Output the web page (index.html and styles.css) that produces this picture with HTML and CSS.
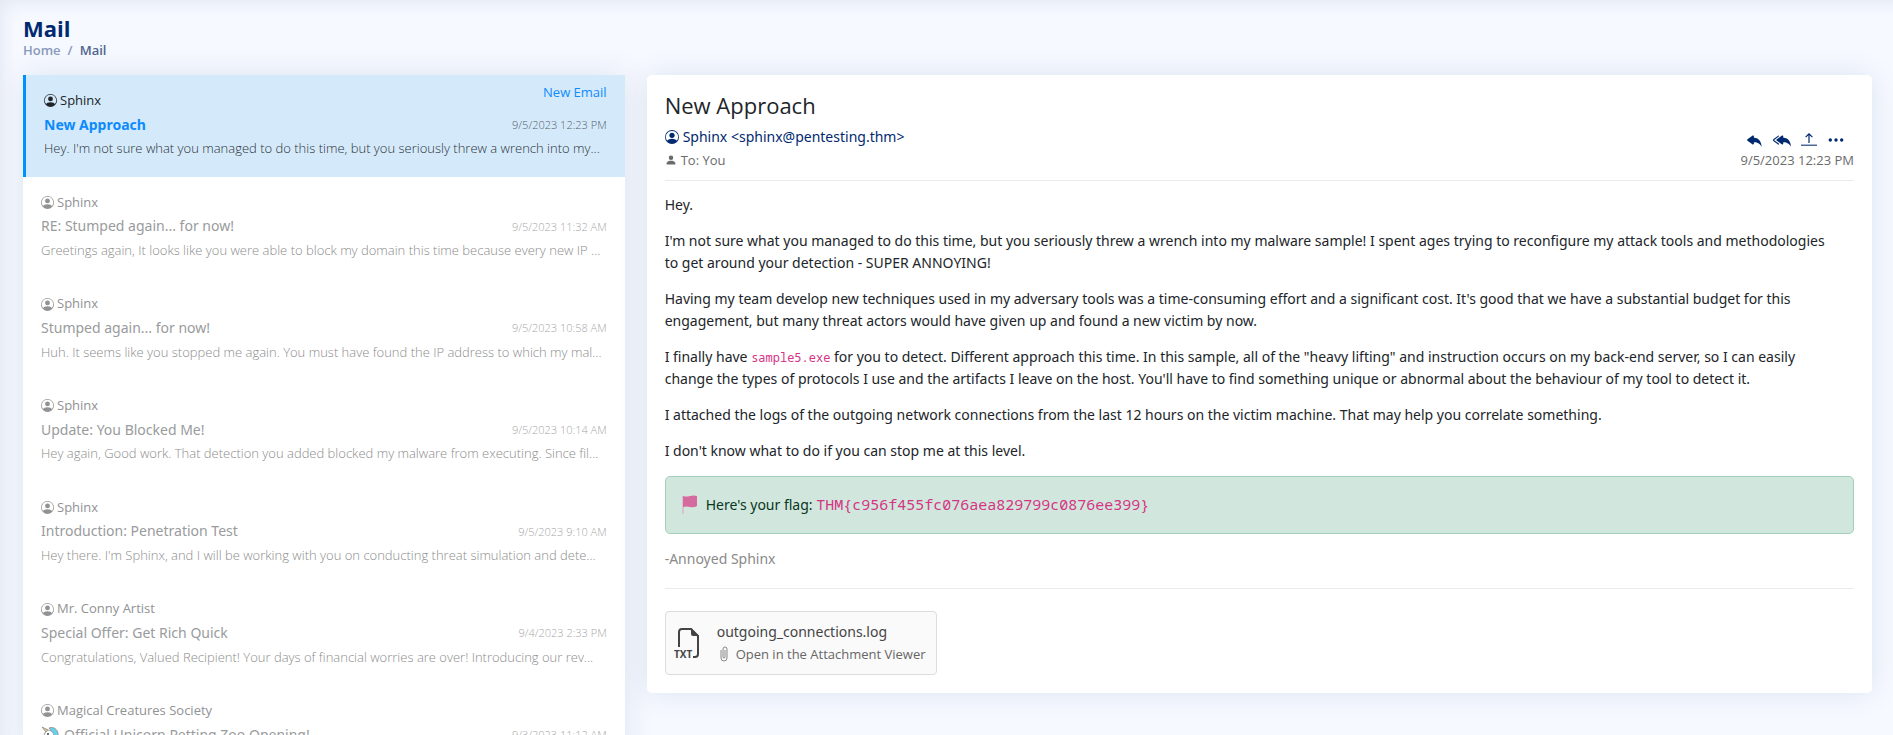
FILE: index.html
```html
<!DOCTYPE html>
<html lang="en">
<head>
<meta charset="utf-8">
<title>Mail</title>
<link rel="stylesheet" href="styles.css">
</head>
<body>
<svg class="sprite" aria-hidden="true">
  <symbol id="person-circle" viewBox="0 0 16 16">
    <path d="M11 6a3 3 0 1 1-6 0 3 3 0 0 1 6 0z"/>
    <path fill-rule="evenodd" d="M0 8a8 8 0 1 1 16 0A8 8 0 0 1 0 8zm8-7a7 7 0 0 0-5.468 11.37C3.242 11.226 4.805 10 8 10s4.757 1.225 5.468 2.37A7 7 0 0 0 8 1z"/>
  </symbol>
  <symbol id="person" viewBox="0 0 16 16">
    <path d="M3 14s-1 0-1-1 1-4 6-4 6 3 6 4-1 1-1 1H3zm5-6a3 3 0 1 0 0-6 3 3 0 0 0 0 6z"/>
  </symbol>
  <symbol id="reply" viewBox="0 0 16 16">
    <path d="M5.921 11.9 1.353 8.62a.719.719 0 0 1 0-1.238L5.921 4.1A.716.716 0 0 1 7 4.719V6c1.5 0 6 0 7 8-2.5-4.5-7-4-7-4v1.281c0 .56-.606.898-1.079.62z"/>
  </symbol>
  <symbol id="reply-all" viewBox="0 0 16 16">
    <path d="M8.021 11.9 3.453 8.62a.719.719 0 0 1 0-1.238L8.021 4.1a.716.716 0 0 1 1.079.619V6c1.5 0 6 0 7 8-2.5-4.5-7-4-7-4v1.281c0 .56-.606.898-1.079.62z"/>
    <path d="M5.232 4.293a.5.5 0 0 1-.106.7L1.114 7.945a.5.5 0 0 1-.042.028.147.147 0 0 0 0 .252.503.503 0 0 1 .042.028l4.012 2.954a.5.5 0 1 1-.593.805L.539 9.073a1.147 1.147 0 0 1 0-1.946l3.994-2.94a.5.5 0 0 1 .699.106z"/>
  </symbol>
  <symbol id="upload" viewBox="0 0 16 16">
    <path opacity=".7" d="M0 12.500h16v1.500H0z"/>
    <path d="M7.400 3.200v7.800h1.200V3.200l2.400 2.400.8-.8L8 1 4.200 4.800l.8.8z"/>
  </symbol>
  <symbol id="dots" viewBox="0 0 16 16">
    <path d="M4 8a1.700 1.700 0 1 1-3.400 0A1.700 1.700 0 0 1 4 8zm5.700 0a1.700 1.700 0 1 1-3.400 0 1.700 1.700 0 0 1 3.400 0zm5.700 0a1.700 1.700 0 1 1-3.400 0 1.700 1.700 0 0 1 3.400 0z"/>
  </symbol>
</svg>

<main class="page">
  <header class="page-head">
    <h1>Mail</h1>
    <nav class="crumbs" aria-label="Breadcrumb"><a href="#home">Home</a><span>/</span><b>Mail</b></nav>
  </header>

  <div class="columns">
    <section class="inbox" aria-label="Inbox">
      <a class="mail mail-active" href="#m1">
        <span class="badge">New Email</span>
        <span class="sender"><svg><use href="#person-circle"/></svg>Sphinx</span>
        <span class="subject"><strong>New Approach</strong><time>9/5/2023 12:23 PM</time></span>
        <span class="snippet">Hey. I'm not sure what you managed to do this time, but you seriously threw a wrench into my...</span>
      </a>
      <a class="mail" href="#m2">
        <span class="sender"><svg><use href="#person-circle"/></svg>Sphinx</span>
        <span class="subject"><span>RE: Stumped again... for now!</span><time>9/5/2023 11:32 AM</time></span>
        <span class="snippet">Greetings again, It looks like you were able to block my domain this time because every new IP ...</span>
      </a>
      <a class="mail" href="#m3">
        <span class="sender"><svg><use href="#person-circle"/></svg>Sphinx</span>
        <span class="subject"><span>Stumped again... for now!</span><time>9/5/2023 10:58 AM</time></span>
        <span class="snippet">Huh. It seems like you stopped me again. You must have found the IP address to which my mal...</span>
      </a>
      <a class="mail" href="#m4">
        <span class="sender"><svg><use href="#person-circle"/></svg>Sphinx</span>
        <span class="subject"><span>Update: You Blocked Me!</span><time>9/5/2023 10:14 AM</time></span>
        <span class="snippet">Hey again, Good work. That detection you added blocked my malware from executing. Since fil...</span>
      </a>
      <a class="mail" href="#m5">
        <span class="sender"><svg><use href="#person-circle"/></svg>Sphinx</span>
        <span class="subject"><span>Introduction: Penetration Test</span><time>9/5/2023 9:10 AM</time></span>
        <span class="snippet">Hey there. I'm Sphinx, and I will be working with you on conducting threat simulation and dete...</span>
      </a>
      <a class="mail" href="#m6">
        <span class="sender"><svg><use href="#person-circle"/></svg>Mr. Conny Artist</span>
        <span class="subject"><span>Special Offer: Get Rich Quick</span><time>9/4/2023 2:33 PM</time></span>
        <span class="snippet">Congratulations, Valued Recipient! Your days of financial worries are over! Introducing our rev...</span>
      </a>
      <a class="mail" href="#m7">
        <span class="sender"><svg><use href="#person-circle"/></svg>Magical Creatures Society</span>
        <span class="subject"><span class="with-emoji"><svg class="unicorn" viewBox="0 0 18 18" aria-hidden="true">
          <path d="M8 2c6-2 10 3 9 9l-2 5c-2-2-2-4-3-6-1-4-2-6-4-8z" fill="#63d4ee" stroke="#999" stroke-width="1"/>
          <path d="M5 5c3-2 7 0 8 4 1 3 1 6 0 9H7c1-2 0-4-1-5l-4 2-1-2z" fill="#f8fdff" stroke="#999" stroke-width="1"/>
          <path d="M1 1l6 3-2 2z" fill="#f2c879" stroke="#999" stroke-width="1"/>
          <circle cx="7" cy="8" r="1" fill="#444"/>
        </svg>Official Unicorn Petting Zoo Opening!</span><time>9/3/2023 11:12 AM</time></span>
      </a>
    </section>

    <article class="message">
      <header class="message-head">
        <div>
          <h2>New Approach</h2>
          <p class="from"><svg><use href="#person-circle"/></svg>Sphinx &lt;sphinx@pentesting.thm&gt;</p>
          <p class="to"><svg><use href="#person"/></svg>To: You</p>
        </div>
        <div class="message-side">
          <div class="actions">
            <button type="button" aria-label="Reply"><svg class="wide"><use href="#reply"/></svg></button>
            <button type="button" aria-label="Reply all"><svg class="wide"><use href="#reply-all"/></svg></button>
            <button type="button" aria-label="Forward"><svg><use href="#upload"/></svg></button>
            <button type="button" aria-label="More"><svg><use href="#dots"/></svg></button>
          </div>
          <time>9/5/2023 12:23 PM</time>
        </div>
      </header>

      <div class="message-body">
        <p>Hey.</p>
        <p>I'm not sure what you managed to do this time, but you seriously threw a wrench into my malware sample! I spent ages trying to reconfigure my attack tools and methodologies<br>to get around your detection - SUPER ANNOYING!</p>
        <p>Having my team develop new techniques used in my adversary tools was a time-consuming effort and a significant cost. It's good that we have a substantial budget for this<br>engagement, but many threat actors would have given up and found a new victim by now.</p>
        <p>I finally have <code>sample5.exe</code> for you to detect. Different approach this time. In this sample, all of the "heavy lifting" and instruction occurs on my back-end server, so I can easily<br>change the types of protocols I use and the artifacts I leave on the host. You'll have to find something unique or abnormal about the behaviour of my tool to detect it.</p>
        <p>I attached the logs of the outgoing network connections from the last 12 hours on the victim machine. That may help you correlate something.</p>
        <p>I don't know what to do if you can stop me at this level.</p>
        <div class="flag">
          <svg viewBox="0 0 16 20" aria-hidden="true"><path d="M1 1v18" stroke="#dba3c1" stroke-width="1"/><path d="M1 1q3 1 7 0t7 0v10q-3 2-7 1t-7 0z" fill="#d6699d"/></svg>
          <span>Here's your flag: <code>THM{c956f455fc076aea829799c0876ee399}</code></span>
        </div>
        <p class="sign">-Annoyed Sphinx</p>
      </div>

      <a class="attachment" href="#attachment">
        <svg class="file" viewBox="0 0 28 32" aria-hidden="true">
          <path d="M5 20V5q0-3 3-3h9l7 7v18q0 3-3 3h-2" fill="none" stroke="#444" stroke-width="2"/>
          <path d="M17 1l8 8h-6q-2 0-2-2z" fill="#444"/>
          <text x="0" y="31">TXT</text>
        </svg>
        <span class="file-text">
          <span class="file-name">outgoing_connections.log</span>
          <span class="file-open"><svg viewBox="0 0 8 16" aria-hidden="true"><path d="M1 4v8a3 3 0 0 0 6 0V3a2 2 0 0 0-4 0v8a1 1 0 0 0 2 0V4" fill="none" stroke="#888" stroke-width="1"/></svg>Open in the Attachment Viewer</span>
        </span>
      </a>
    </article>
  </div>
</main>
</body>
</html>
```
FILE: styles.css
```css
* { box-sizing: border-box; }

body {
  margin: 0;
  height: 100vh;
  overflow: hidden;
  background: #f6f9ff;
  color: #212529;
  font-family: "Open Sans", sans-serif;
  font-size: 14px;
}

h1, h2, p { margin: 0; }
a { color: inherit; text-decoration: none; }
svg { fill: currentColor; flex: none; }
.sprite { display: none; }

.page {
  display: flex;
  flex-direction: column;
  height: 100%;
  padding: 14px 21px 0 23px;
  box-shadow: inset 12px 12px 20px -12px rgba(1, 41, 112, 0.1);
}

.page-head { height: 61px; flex: none; }

h1 {
  color: #012970;
  font-size: 22px;
  font-weight: 700;
  line-height: 28px;
}

.crumbs {
  display: flex;
  gap: 7px;
  color: #899bbd;
  font-size: 13px;
  font-weight: 600;
  line-height: 17px;
}

.crumbs b { color: #51678f; font-weight: 600; }

.columns {
  display: grid;
  grid-template-columns: repeat(12, minmax(0, 1fr));
  gap: 22px;
  flex: 1;
  min-height: 0;
}

.inbox {
  grid-column: span 4;
  background: #fff;
  box-shadow: 0 0 30px rgba(1, 41, 112, 0.1);
}

.mail {
  position: relative;
  display: flex;
  flex-direction: column;
  gap: 3px;
  padding: 16px 18px 18px;
  color: #909294;
}

.mail-active {
  border-left: 3px solid #0090ff;
  background: #d4eafb;
  color: #212529;
}

.badge {
  position: absolute;
  top: 8px;
  right: 18px;
  color: #0d8bfd;
  font-size: 13px;
  line-height: 18px;
}

.sender {
  display: flex;
  align-items: center;
  gap: 3px;
  font-size: 13px;
  line-height: 1.5;
}

.sender svg { width: 13px; height: 13px; }

.subject {
  display: flex;
  align-items: center;
  justify-content: space-between;
  font-family: "Noto Sans", sans-serif;
  font-size: 14px;
  line-height: 1.62;
}

.subject > span { color: #999b9d; }
.subject strong { color: #0d8bfd; font-weight: 700; }
.subject time { color: #a8a8a8; font-family: "Open Sans", sans-serif; font-size: 11px; font-weight: 300; }
.mail-active time { color: #56616a; }
.with-emoji { display: flex; align-items: center; gap: 5px; }
.unicorn { width: 18px; height: 18px; }

.snippet {
  overflow: hidden;
  color: #8c8c8c;
  font-size: 13px;
  font-weight: 300;
  line-height: 1.5;
  text-overflow: ellipsis;
  white-space: nowrap;
}

.mail-active .snippet { color: #2c3136; }

.message {
  grid-column: span 8;
  align-self: start;
  padding: 18px;
  border-radius: 5px;
  background: #fff;
  box-shadow: 0 0 30px rgba(1, 41, 112, 0.1);
}

.message-head {
  display: flex;
  align-items: flex-end;
  justify-content: space-between;
  padding-bottom: 9px;
  border-bottom: 1px solid #ebebeb;
}

h2 {
  font-size: 22px;
  font-weight: 400;
  line-height: 25px;
}

.from {
  display: flex;
  align-items: center;
  gap: 4px;
  margin-top: 7px;
  color: #012970;
  font-family: "Noto Sans", sans-serif;
  font-size: 14px;
  line-height: 24px;
}

.from svg { width: 14px; height: 14px; }

.to {
  display: flex;
  align-items: center;
  gap: 4px;
  color: #6b6b6b;
  font-size: 13px;
  line-height: 22px;
}

.to svg { width: 12px; height: 12px; }

.message-side { color: #6b6b6b; font-size: 13px; line-height: 22px; }

.actions {
  display: flex;
  justify-content: flex-end;
  gap: 11px;
  padding-right: 10px;
}

button {
  display: flex;
  align-items: center;
  padding: 0;
  border: 0;
  background: none;
  color: #012970;
}

button svg { width: 16px; height: 16px; }
button .wide { width: 18px; height: 18px; margin: 0 -1px; overflow: visible; }

.message-body {
  padding: 13px 0 18px;
  border-bottom: 1px solid #ebebeb;
  font-family: "Noto Sans", sans-serif;
  line-height: 22px;
}

.message-body p { margin-bottom: 14px; }

code {
  color: #d63384;
  font-family: "Noto Sans Mono", "DejaVu Sans Mono", monospace;
  font-size: 12px;
  line-height: 1;
}

.flag {
  display: flex;
  align-items: center;
  gap: 8px;
  margin-bottom: 14px;
  padding: 17px 16px;
  border: 1px solid #a3cfbb;
  border-radius: 5px;
  background: #d1e7dd;
  color: #0a3622;
}

.flag svg { width: 16px; height: 20px; }
.flag code { font-size: 15px; }
.message-body .sign { margin-bottom: 0; color: #8a8a8a; }

.attachment {
  display: inline-flex;
  align-items: center;
  gap: 15px;
  margin-top: 22px;
  padding: 9px 10px 9px 8px;
  border: 1px solid #dcdcdc;
  border-radius: 4px;
  background: #fafafa;
  color: #444;
  vertical-align: top;
}

.file { width: 28px; height: 32px; }
.file text { font-size: 10px; font-weight: 700; }
.file-text { display: flex; flex-direction: column; line-height: 22px; }
.file-name { font-family: "Noto Sans", sans-serif; }
.file-open { display: flex; align-items: center; gap: 8px; color: #666; font-size: 13px; }
.file-open svg { width: 8px; height: 16px; margin-left: 3px; }
```
